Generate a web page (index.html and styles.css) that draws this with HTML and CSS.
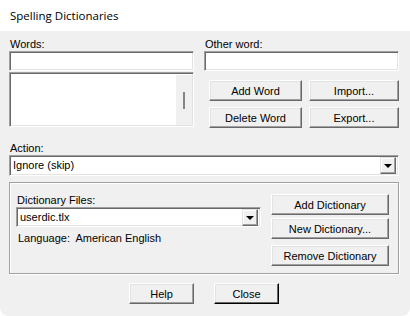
FILE: index.html
```html
<!DOCTYPE html>
<html lang="en">
<head>
    <meta charset="UTF-8">
    <title>Spelling Dictionaries</title>
    <link rel="stylesheet" href="styles.css">
</head>
<body>
    <div class="window">
        <div class="titlebar">Spelling Dictionaries</div>
        <div class="client">
            <div class="top-row">
                <div class="col-words">
                    <div class="label">Words:</div>
                    <div class="field"></div>
                    <div class="listbox">
                        <div class="list-scroll"><span class="thumb"></span></div>
                    </div>
                </div>
                <div class="col-other">
                    <div class="label">Other word:</div>
                    <div class="field"></div>
                    <div class="word-buttons">
                        <button class="btn">Add Word</button>
                        <button class="btn">Import...</button>
                        <button class="btn">Delete Word</button>
                        <button class="btn">Export...</button>
                    </div>
                </div>
            </div>

            <div class="label action-label">Action:</div>
            <div class="combo">
                <span class="combo-text">Ignore (skip)</span>
                <span class="combo-btn"><span class="arrow"></span></span>
            </div>

            <div class="group">
                <div class="group-left">
                    <div class="label">Dictionary Files:</div>
                    <div class="combo">
                        <span class="combo-text dict-text">userdic.tlx</span>
                        <span class="combo-btn"><span class="arrow"></span></span>
                    </div>
                    <div class="language">Language:&nbsp; American English</div>
                </div>
                <div class="group-right">
                    <button class="btn">Add Dictionary</button>
                    <button class="btn">New Dictionary...</button>
                    <button class="btn remove">Remove Dictionary</button>
                </div>
            </div>

            <div class="footer">
                <button class="btn footer-btn">Help</button>
                <button class="btn footer-btn default">Close</button>
            </div>
        </div>
    </div>
</body>
</html>
```

FILE: styles.css
```css
body {
    margin: 0;
    background: #fff;
    font-family: "Liberation Sans", Arial, sans-serif;
    font-size: 11px;
    color: #000;
}
.window {
    width: 410px;
    height: 316px;
    border-radius: 8px;
    overflow: hidden;
    display: flex;
    flex-direction: column;
}
.titlebar {
    height: 31px;
    padding-left: 10px;
    line-height: 32px;
    font-family: "Open Sans", "Noto Sans", sans-serif;
    font-size: 11.5px;
    background: #fff;
}
.client {
    flex: 1;
    background: #f0f0f0;
    padding: 7px 11px 0 9px;
    border-radius: 0 0 8px 8px;
}
.label {
    height: 13px;
    line-height: 13px;
    padding-left: 1px;
    white-space: nowrap;
}
.top-row {
    display: grid;
    grid-template-columns: 185px 195px;
    column-gap: 10px;
}
.field, .listbox, .combo {
    box-sizing: border-box;
    background: #fff;
    border: 1px solid;
    border-color: #a0a0a0 #fff #fff #a0a0a0;
    box-shadow: inset 1px 1px 0 #696969, inset -1px -1px 0 #e3e3e3;
}
.field {
    height: 20px;
}
.listbox {
    height: 55px;
    margin-top: 1px;
    display: flex;
    justify-content: flex-end;
    padding: 2px 1px 1px 2px;
}
.list-scroll {
    width: 16px;
    background: #f0f0f0;
    display: flex;
    justify-content: center;
    padding-top: 17px;
}
.thumb {
    width: 2px;
    height: 17px;
    background: #858585;
}
.word-buttons {
    display: grid;
    grid-template-columns: 93px 90px;
    grid-auto-rows: 21px;
    column-gap: 7px;
    row-gap: 6px;
    margin: 9px 0 0 5px;
}
.btn {
    box-sizing: border-box;
    font-family: inherit;
    font-size: 11px;
    color: #000;
    background: #f0f0f0;
    border: 1px solid;
    border-color: #fff #696969 #696969 #fff;
    box-shadow: inset -1px -1px 0 #a0a0a0, inset 1px 1px 0 #e3e3e3;
    padding: 0;
    height: 21px;
    white-space: nowrap;
}
.action-label {
    margin-top: 14px;
}
.combo {
    height: 21px;
    display: flex;
    align-items: center;
    justify-content: space-between;
    padding: 2px;
}
.combo-text {
    padding-left: 1px;
    line-height: 15px;
}
.combo-btn {
    box-sizing: border-box;
    width: 16px;
    height: 17px;
    background: #f0f0f0;
    border: 1px solid;
    border-color: #e3e3e3 #696969 #696969 #e3e3e3;
    box-shadow: inset -1px -1px 0 #a0a0a0, inset 1px 1px 0 #fff;
    display: flex;
    align-items: center;
    justify-content: center;
}
.arrow {
    width: 0;
    height: 0;
    border-left: 4px solid transparent;
    border-right: 4px solid transparent;
    border-top: 4px solid #000;
    margin-top: 1px;
}
.group {
    box-sizing: border-box;
    height: 92px;
    margin-top: 6px;
    border: 1px solid #a0a0a0;
    box-shadow: inset 1px 1px 0 #fff, 1px 1px 0 #fff;
    display: flex;
    justify-content: space-between;
    padding: 11px 9px 0 6px;
}
.group-left {
    width: 245px;
}
.group-left .combo {
    height: 20px;
}
.dict-text {
    padding-left: 1px;
}
.language {
    margin-top: 5px;
    padding-left: 2px;
    line-height: 13px;
    white-space: pre;
}
.group-right {
    width: 118px;
    display: flex;
    flex-direction: column;
    gap: 3px;
}
.group-right .remove {
    margin-top: 3px;
}
.footer {
    display: flex;
    justify-content: center;
    gap: 20px;
    margin-top: 9px;
}
.footer-btn {
    width: 65px;
}
.default {
    border-color: #fff #000 #000 #fff;
    box-shadow: inset -1px -1px 0 #696969, inset 1px 1px 0 #e3e3e3;
}
```
